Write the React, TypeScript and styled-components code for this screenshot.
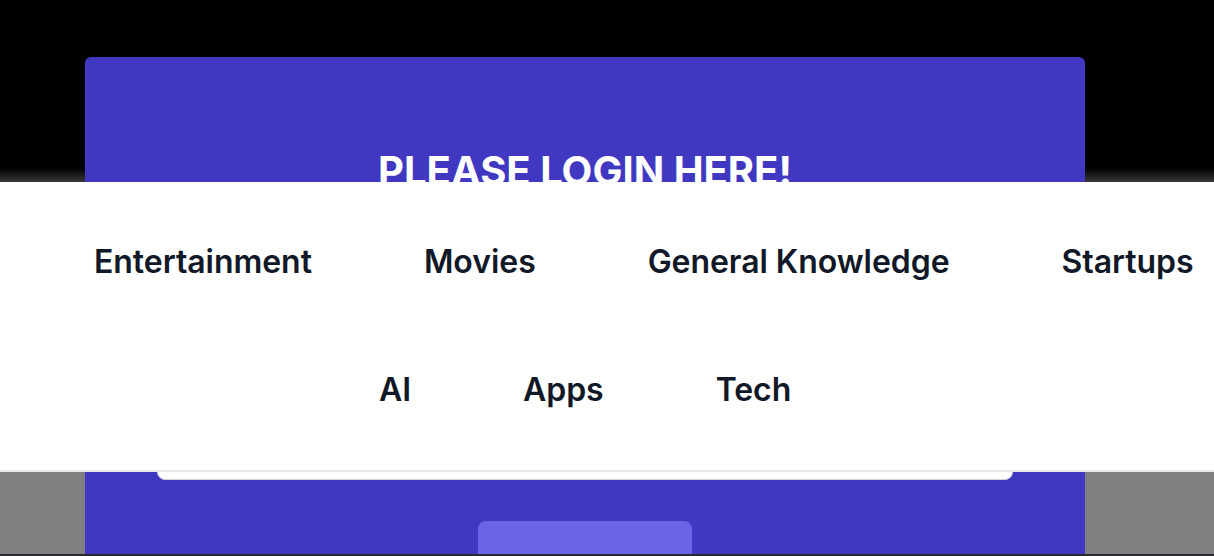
import React from 'react';
import styled, { createGlobalStyle } from 'styled-components';

const categoryRows: { indent: number; items: string[] }[] = [
  { indent: 94, items: ['Entertainment', 'Movies', 'General Knowledge', 'Startups'] },
  { indent: 379, items: ['AI', 'Apps', 'Tech'] },
];

export default function App(): JSX.Element {
  return (
    <>
      <GlobalStyle />
      <Page>
        <LoginCard>
          <Title>Please login here!</Title>
          <Field type="text" aria-label="username" />
          <SubmitButton type="button" aria-label="login" />
        </LoginCard>
      </Page>
      <CategoryMenu>
        {categoryRows.map((row) => (
          <CategoryRow key={row.indent} $indent={row.indent}>
            {row.items.map((item) => (
              <CategoryItem key={item}>{item}</CategoryItem>
            ))}
          </CategoryRow>
        ))}
      </CategoryMenu>
    </>
  );
}

// styles
const GlobalStyle = createGlobalStyle`
  html {
    background: #2b2b2f;
  }
  body {
    margin: 0;
    height: 554px;
    overflow: hidden;
    font-family: Inter, 'Noto Sans', sans-serif;
    background: linear-gradient(to bottom, #000 168px, #808080 200px);
  }
`;

const Page = styled.main`
  display: flex;
  padding: 57px 0 0 85px;
`;

const LoginCard = styled.section`
  width: 1000px;
  height: 497px;
  overflow: hidden;
  box-sizing: border-box;
  display: flex;
  flex-direction: column;
  align-items: center;
  padding-top: 90px;
  background-color: #4138c2;
  border-radius: 6px 6px 0 0;
`;

const Title = styled.h1`
  margin: 0;
  color: #fff;
  font-size: 40px;
  line-height: 48px;
  font-weight: 700;
  text-transform: uppercase;
`;

const Field = styled.input`
  flex-shrink: 0;
  margin-top: 237px;
  width: 856px;
  height: 48px;
  box-sizing: border-box;
  border: 1px solid #d1d5db;
  border-radius: 8px;
  background: #fff;
`;

const SubmitButton = styled.button`
  flex-shrink: 0;
  margin-top: 41px;
  width: 214px;
  height: 48px;
  border: none;
  border-radius: 8px;
  background-color: #6a64e6;
`;

const CategoryMenu = styled.nav`
  position: fixed;
  top: 182px;
  left: 0;
  right: 0;
  height: 288px;
  display: flex;
  flex-direction: column;
  justify-content: center;
  background-color: #fff;
  border-bottom: 2px solid #e5e7eb;
`;

const CategoryRow = styled.ul<{ $indent: number }>`
  display: flex;
  gap: 112px;
  margin: 0;
  padding: 0 0 0 ${(p) => p.$indent}px;
  height: 128px;
  align-items: center;
  list-style: none;
  white-space: nowrap;
`;

const CategoryItem = styled.li`
  color: #111827;
  font-size: 32px;
  line-height: 40px;
  font-weight: 600;
  letter-spacing: -0.05px;
  cursor: pointer;
`;
